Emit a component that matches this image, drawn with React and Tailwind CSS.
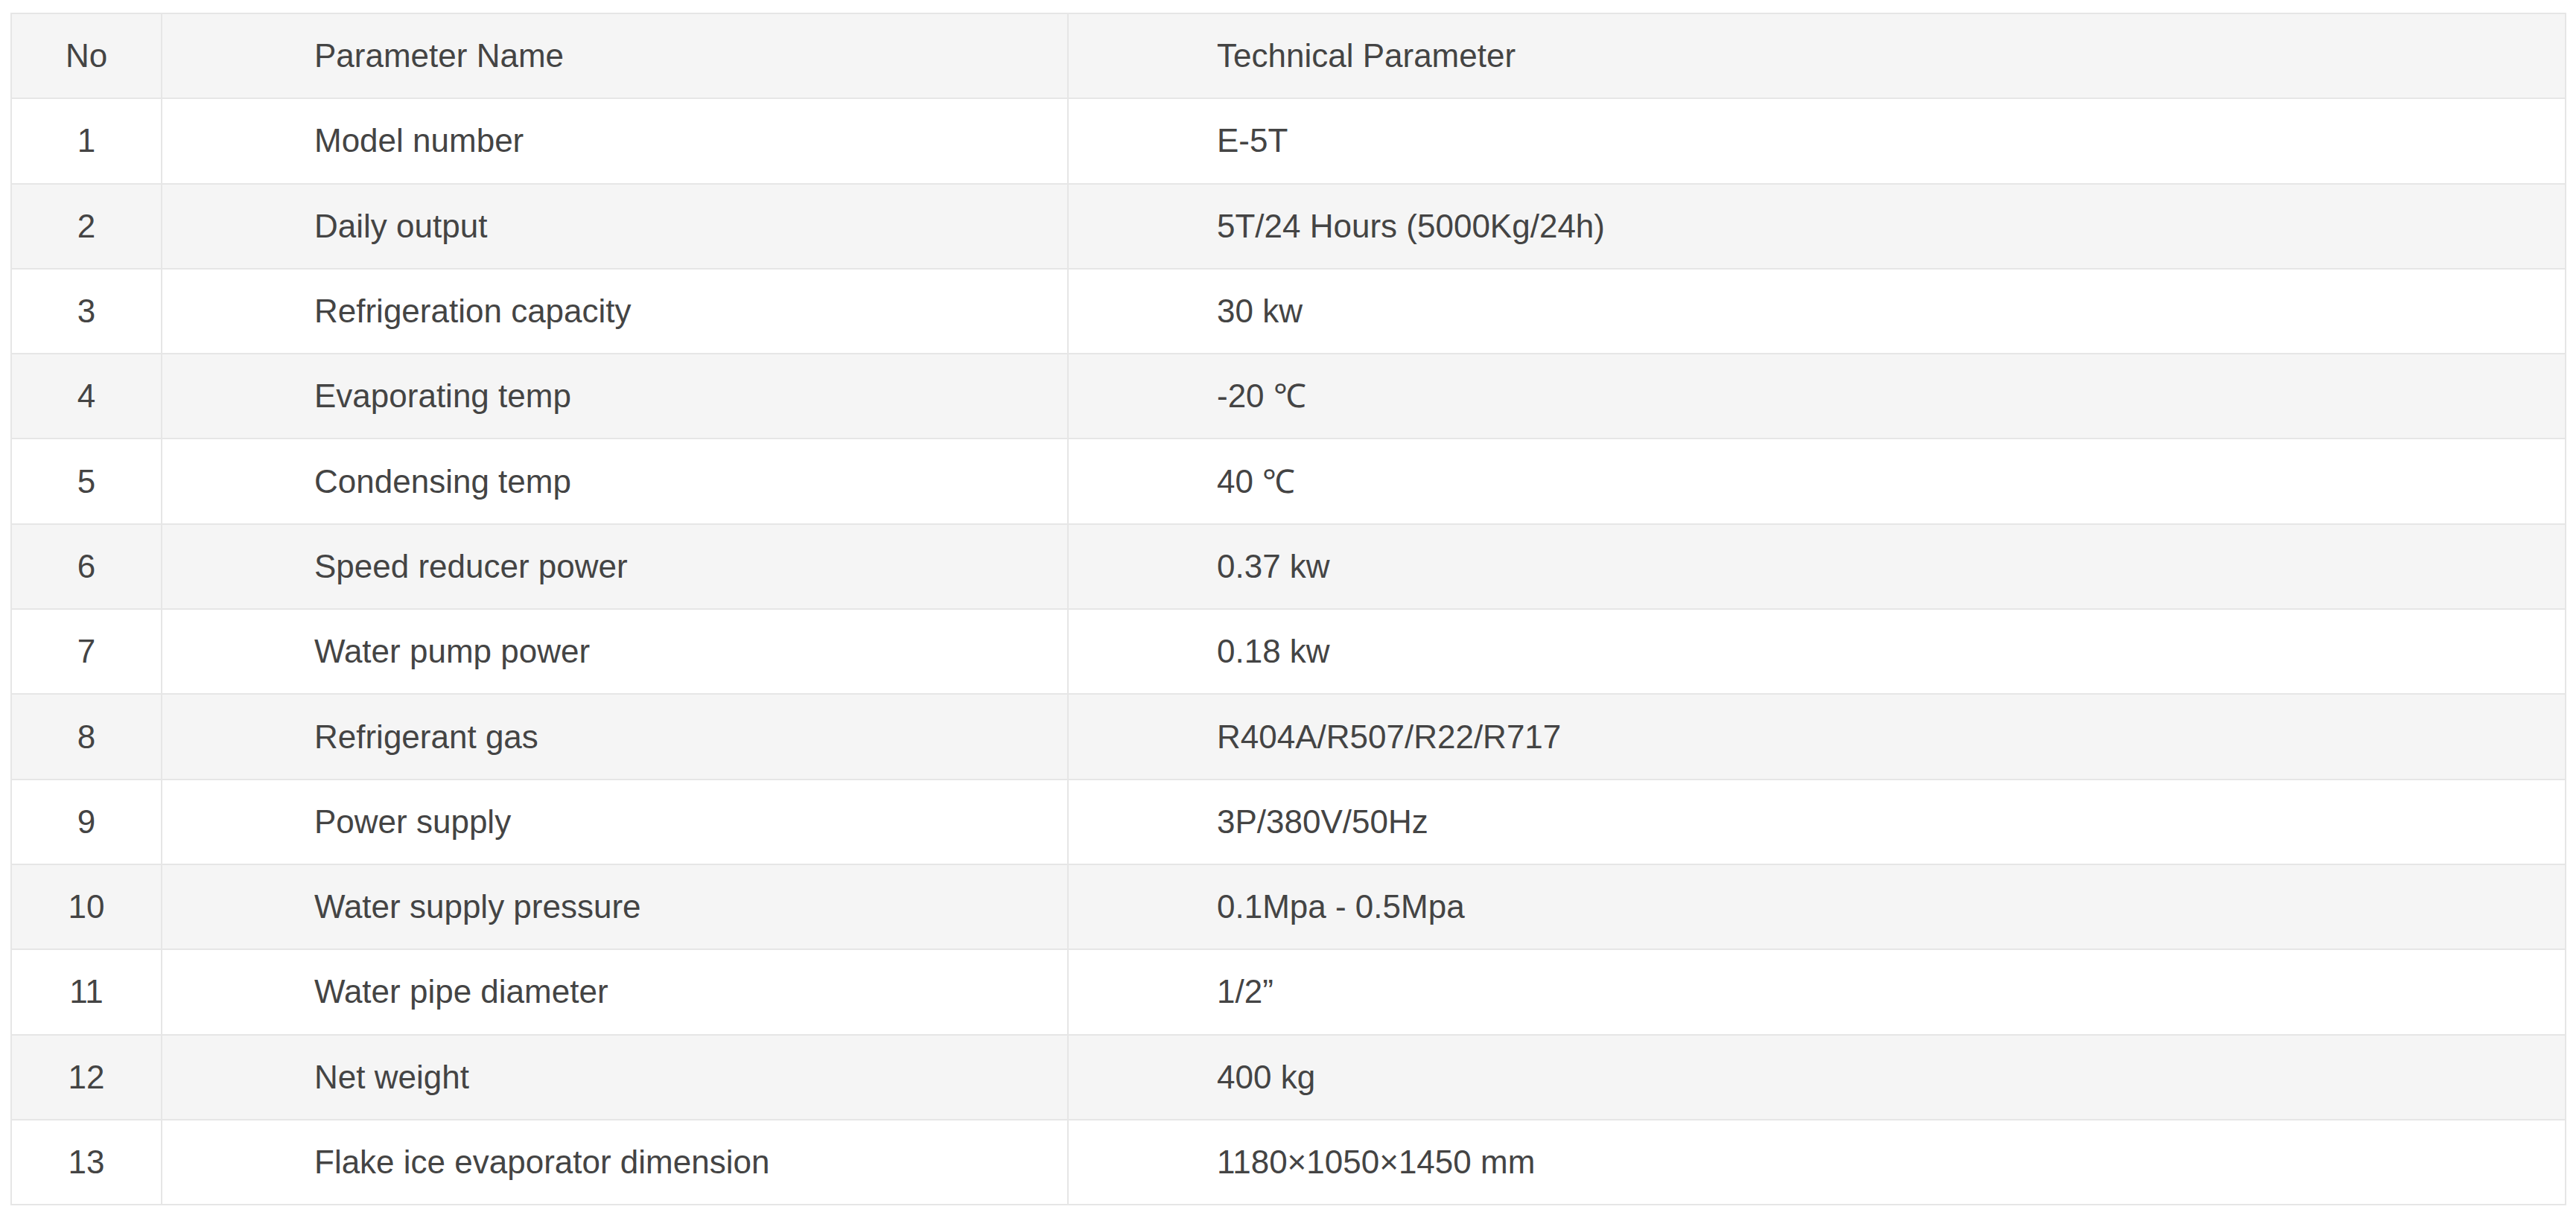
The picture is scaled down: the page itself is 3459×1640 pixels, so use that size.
const rows = [
  ['1', 'Model number', 'E-5T'],
  ['2', 'Daily output', '5T/24 Hours (5000Kg/24h)'],
  ['3', 'Refrigeration capacity', '30 kw'],
  ['4', 'Evaporating temp', '-20 ℃'],
  ['5', 'Condensing temp', '40 ℃'],
  ['6', 'Speed reducer power', '0.37 kw'],
  ['7', 'Water pump power', '0.18 kw'],
  ['8', 'Refrigerant gas', 'R404A/R507/R22/R717'],
  ['9', 'Power supply', '3P/380V/50Hz'],
  ['10', 'Water supply pressure', '0.1Mpa - 0.5Mpa'],
  ['11', 'Water pipe diameter', '1/2”'],
  ['12', 'Net weight', '400 kg'],
  ['13', 'Flake ice evaporator dimension', '1180×1050×1450 mm'],
];

const cell = 'h-[114.3px] border-2 border-[#e6e6e6] align-middle p-0';

function SpecRow({ no, name, value, shaded }) {
  return (
    <tr className={shaded ? 'bg-[#f5f5f5]' : 'bg-white'}>
      <td className={`${cell} text-center`}>{no}</td>
      <td className={`${cell} pl-[204px]`}>{name}</td>
      <td className={`${cell} pl-[199px]`}>{value}</td>
    </tr>
  );
}

export default function App() {
  return (
    <div className="min-h-screen bg-white pl-[14px] pt-[17px] font-['Liberation_Sans',Arial,sans-serif] text-[44px] text-[#444]">
      <table className="w-[3432px] table-fixed border-collapse">
        <colgroup>
          <col className="w-[202px]" />
          <col className="w-[1217px]" />
          <col />
        </colgroup>
        <tbody>
          <SpecRow no="No" name="Parameter Name" value="Technical Parameter" shaded />
          {rows.map(([no, name, value], i) => (
            <SpecRow key={no} no={no} name={name} value={value} shaded={i % 2 === 1} />
          ))}
        </tbody>
      </table>
    </div>
  );
}
